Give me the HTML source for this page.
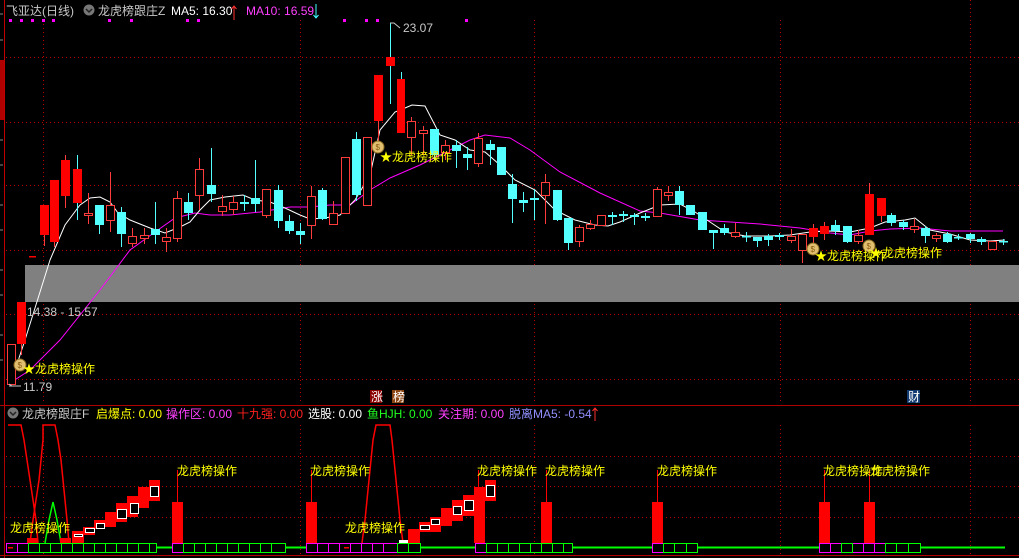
<!DOCTYPE html>
<html><head><meta charset="utf-8"><style>
body{margin:0;background:#000;width:1019px;height:558px;overflow:hidden;font-family:"Liberation Sans","Noto Sans CJK SC",sans-serif}
svg{position:absolute;left:0;top:0}
text{font-family:"Liberation Sans","Noto Sans CJK SC",sans-serif;font-size:12px}
</style></head><body>
<svg width="1019" height="558" viewBox="0 0 1019 558">
<!-- grid -->
<g stroke="#c00000" stroke-dasharray="1,3" stroke-width="1">
<line x1="6" y1="57.5" x2="1019" y2="57.5"/><line x1="6" y1="122.5" x2="1019" y2="122.5"/><line x1="6" y1="185.5" x2="1019" y2="185.5"/><line x1="6" y1="250.5" x2="1019" y2="250.5"/><line x1="6" y1="314.5" x2="1019" y2="314.5"/><line x1="6" y1="379.5" x2="1019" y2="379.5"/>
<line x1="43.5" y1="20" x2="43.5" y2="404"/><line x1="300.5" y1="20" x2="300.5" y2="404"/><line x1="534.5" y1="20" x2="534.5" y2="404"/><line x1="780.5" y1="20" x2="780.5" y2="404"/><line x1="970.5" y1="0" x2="970.5" y2="404"/>
<line x1="6" y1="456.5" x2="1019" y2="456.5"/><line x1="6" y1="486.5" x2="1019" y2="486.5"/><line x1="6" y1="517.5" x2="1019" y2="517.5"/>
<line x1="43.5" y1="425" x2="43.5" y2="555"/><line x1="300.5" y1="425" x2="300.5" y2="555"/><line x1="534.5" y1="425" x2="534.5" y2="555"/><line x1="780.5" y1="425" x2="780.5" y2="555"/><line x1="970.5" y1="425" x2="970.5" y2="555"/>
</g>
<!-- left axis -->
<line x1="4.5" y1="0" x2="4.5" y2="405" stroke="#c00000"/>
<rect x="0" y="60" width="4" height="60" fill="#b00000"/>
<g stroke="#888" stroke-width="1"><line x1="0" y1="14" x2="3" y2="14"/><line x1="0" y1="40" x2="3" y2="40"/><line x1="0" y1="140" x2="3" y2="140"/><line x1="0" y1="165" x2="3" y2="165"/><line x1="0" y1="205" x2="3" y2="205"/><line x1="0" y1="230" x2="3" y2="230"/><line x1="0" y1="270" x2="3" y2="270"/><line x1="0" y1="295" x2="3" y2="295"/><line x1="0" y1="335" x2="3" y2="335"/><line x1="0" y1="360" x2="3" y2="360"/></g>
<line x1="0" y1="405.5" x2="1019" y2="405.5" stroke="#b00000"/>
<line x1="0" y1="555.5" x2="1019" y2="555.5" stroke="#b00000"/>
<line x1="4.5" y1="405" x2="4.5" y2="558" stroke="#b00000"/>
<!-- grey band -->
<rect x="25" y="265" width="994" height="37" fill="#808080"/>
<!-- header -->
<text x="6" y="15" fill="#c8c8c8">飞亚达(日线)</text>
<circle cx="89" cy="10" r="5.5" fill="#777"/><path d="M86 9l3 3 3-3" stroke="#222" stroke-width="1.5" fill="none"/>
<text x="98" y="15" fill="#c8c8c8">龙虎榜跟庄Z</text>
<text x="171" y="15" fill="#fff">MA5: 16.30</text>
<path d="M234 20V6M231.5 9l2.5-3 2.5 3" stroke="#ff3030" fill="none"/>
<text x="246" y="15" fill="#ff40ff">MA10: 16.59</text>
<path d="M316 4v14M313.5 15l2.5 3 2.5-3" stroke="#40ffff" fill="none"/>
<g fill="#ff00ff"><rect x="9" y="19" width="3" height="3"/><rect x="20" y="19" width="3" height="3"/><rect x="31" y="19" width="3" height="3"/><rect x="42" y="19" width="3" height="3"/><rect x="52" y="19" width="3" height="3"/><rect x="108" y="19" width="3" height="3"/><rect x="130" y="19" width="3" height="3"/><rect x="186" y="19" width="3" height="3"/><rect x="197" y="19" width="3" height="3"/><rect x="343" y="19" width="3" height="3"/><rect x="365" y="19" width="3" height="3"/><rect x="376" y="19" width="3" height="3"/><rect x="465" y="19" width="3" height="3"/></g>
<!-- MA lines -->
<polyline fill="none" stroke="#ff00ff" stroke-width="1" points="10,383 30,370 60,340 100,290 130,250 155,232 175,218 195,213 210,215 230,215 260,212 290,207 310,207 330,205 350,205 370,190 390,178 420,165 450,150 470,140 485,135 510,138 530,150 560,172 600,193 640,211 660,213 700,220 760,224 800,228 830,233 850,235 870,231 890,229 920,228 950,231 1003,231"/>
<polyline fill="none" stroke="#ffffff" stroke-width="1" points="10,385 25,340 50,260 65,225 80,205 90,198 100,197 110,202 118,213 130,220 150,228 165,233 180,227 190,222 200,210 210,200 225,197 243,195 255,200 270,202 285,208 300,215 310,219 325,218 340,215 355,200 370,175 380,130 395,112 405,108 412,105 425,106 440,135 455,140 470,150 485,152 500,165 515,180 535,190 555,210 575,220 595,225 608,226 620,222 640,213 660,205 680,204 695,212 710,222 725,232 745,236 770,236 790,235 810,232 830,231 850,232 870,228 885,222 905,220 915,218 930,230 950,234 970,240 990,241 1005,240"/>
<!-- wicks -->
<g stroke="#ff3c3c" stroke-width="1">
<line x1="11.5" y1="344" x2="11.5" y2="385"/><line x1="21.5" y1="302" x2="21.5" y2="355"/><line x1="44.5" y1="205" x2="44.5" y2="246"/><line x1="54.5" y1="180" x2="54.5" y2="247"/><line x1="65.5" y1="155" x2="65.5" y2="208"/><line x1="88.5" y1="193" x2="88.5" y2="224"/><line x1="110.5" y1="172" x2="110.5" y2="232"/><line x1="132.5" y1="228" x2="132.5" y2="247"/><line x1="144.5" y1="228" x2="144.5" y2="244"/><line x1="166.5" y1="228" x2="166.5" y2="252"/><line x1="177.5" y1="191" x2="177.5" y2="242"/><line x1="199.5" y1="158" x2="199.5" y2="210"/><line x1="222.5" y1="195" x2="222.5" y2="216"/><line x1="233.5" y1="196" x2="233.5" y2="215"/><line x1="266.5" y1="189" x2="266.5" y2="218"/><line x1="311.5" y1="186" x2="311.5" y2="239"/><line x1="333.5" y1="201" x2="333.5" y2="224"/><line x1="378.5" y1="75" x2="378.5" y2="150"/><line x1="411.5" y1="117" x2="411.5" y2="155"/><line x1="423.5" y1="126" x2="423.5" y2="155"/><line x1="445.5" y1="140" x2="445.5" y2="160"/><line x1="478.5" y1="133" x2="478.5" y2="167"/><line x1="545.5" y1="174" x2="545.5" y2="224"/><line x1="579.5" y1="225" x2="579.5" y2="247"/><line x1="590.5" y1="220" x2="590.5" y2="230"/><line x1="601.5" y1="215" x2="601.5" y2="225"/><line x1="657.5" y1="187" x2="657.5" y2="216"/><line x1="668.5" y1="186" x2="668.5" y2="201"/><line x1="735.5" y1="223" x2="735.5" y2="238"/><line x1="791.5" y1="229" x2="791.5" y2="243"/><line x1="802.5" y1="234" x2="802.5" y2="263"/><line x1="813.5" y1="224" x2="813.5" y2="245"/><line x1="824.5" y1="222" x2="824.5" y2="240"/><line x1="858.5" y1="230" x2="858.5" y2="244"/><line x1="869.5" y1="183" x2="869.5" y2="235"/><line x1="881.5" y1="198" x2="881.5" y2="222"/><line x1="914.5" y1="219" x2="914.5" y2="233"/><line x1="936.5" y1="233" x2="936.5" y2="242"/><line x1="992.5" y1="241" x2="992.5" y2="249"/>
</g>
<g stroke="#54ffff" stroke-width="1">
<line x1="77.5" y1="155" x2="77.5" y2="220"/><line x1="99.5" y1="205" x2="99.5" y2="234"/><line x1="121.5" y1="207" x2="121.5" y2="247"/><line x1="155.5" y1="202" x2="155.5" y2="244"/><line x1="188.5" y1="193" x2="188.5" y2="220"/><line x1="211.5" y1="148" x2="211.5" y2="202"/><line x1="244.5" y1="195" x2="244.5" y2="211"/><line x1="255.5" y1="160" x2="255.5" y2="212"/><line x1="278.5" y1="185" x2="278.5" y2="228"/><line x1="289.5" y1="215" x2="289.5" y2="234"/><line x1="300.5" y1="223" x2="300.5" y2="244"/><line x1="322.5" y1="188" x2="322.5" y2="220"/><line x1="356.5" y1="132" x2="356.5" y2="201"/><line x1="390.5" y1="23" x2="390.5" y2="104"/><line x1="401.5" y1="72" x2="401.5" y2="133"/><line x1="434.5" y1="129" x2="434.5" y2="160"/><line x1="456.5" y1="140" x2="456.5" y2="168"/><line x1="467.5" y1="147" x2="467.5" y2="170"/><line x1="490.5" y1="140" x2="490.5" y2="165"/><line x1="512.5" y1="174" x2="512.5" y2="223"/><line x1="523.5" y1="192" x2="523.5" y2="212"/><line x1="534.5" y1="189" x2="534.5" y2="220"/><line x1="557.5" y1="190" x2="557.5" y2="221"/><line x1="568.5" y1="218" x2="568.5" y2="250"/><line x1="612.5" y1="212" x2="612.5" y2="225"/><line x1="623.5" y1="211" x2="623.5" y2="222"/><line x1="634.5" y1="213" x2="634.5" y2="225"/><line x1="645.5" y1="213" x2="645.5" y2="221"/><line x1="679.5" y1="186" x2="679.5" y2="215"/><line x1="713.5" y1="230" x2="713.5" y2="249"/><line x1="724.5" y1="224" x2="724.5" y2="235"/><line x1="746.5" y1="232" x2="746.5" y2="242"/><line x1="757.5" y1="237" x2="757.5" y2="247"/><line x1="768.5" y1="234" x2="768.5" y2="246"/><line x1="779.5" y1="233" x2="779.5" y2="240"/><line x1="835.5" y1="220" x2="835.5" y2="235"/><line x1="847.5" y1="226" x2="847.5" y2="243"/><line x1="891.5" y1="213" x2="891.5" y2="226"/><line x1="903.5" y1="220" x2="903.5" y2="230"/><line x1="925.5" y1="226" x2="925.5" y2="243"/><line x1="947.5" y1="232" x2="947.5" y2="243"/><line x1="958.5" y1="234" x2="958.5" y2="240"/><line x1="970.5" y1="233" x2="970.5" y2="243"/><line x1="981.5" y1="237" x2="981.5" y2="245"/><line x1="1003.5" y1="239" x2="1003.5" y2="245"/>
</g>
<!-- solid red bodies -->
<g fill="#ff0000">
<rect x="17" y="302" width="9" height="42"/><rect x="29" y="256" width="7" height="1.5"/><rect x="40" y="205" width="9" height="30"/><rect x="50" y="180" width="9" height="62"/><rect x="61" y="160" width="9" height="36"/><rect x="73" y="169" width="9" height="34"/><rect x="374" y="75" width="9" height="46"/><rect x="386" y="57" width="9" height="9"/><rect x="397" y="79" width="8" height="54"/><rect x="809" y="228" width="9" height="9"/><rect x="820" y="226" width="9" height="8"/><rect x="865" y="194" width="9" height="41"/><rect x="877" y="198" width="9" height="18"/>
</g>
<!-- hollow red bodies -->
<g fill="#000" stroke="#ff3c3c" stroke-width="1">
<rect x="7.5" y="344.5" width="8" height="40"/><rect x="84.5" y="213.5" width="8" height="2"/><rect x="106.5" y="205.5" width="8" height="15"/><rect x="128.5" y="236.5" width="8" height="7"/><rect x="140.5" y="235.5" width="8" height="3"/><rect x="162.5" y="237.5" width="8" height="4"/><rect x="173.5" y="198.5" width="8" height="40"/><rect x="195.5" y="169.5" width="8" height="26"/><rect x="218.5" y="206.5" width="8" height="5"/><rect x="229.5" y="202.5" width="8" height="7"/><rect x="262.5" y="189.5" width="8" height="26"/><rect x="307.5" y="196.5" width="8" height="29"/><rect x="329.5" y="213.5" width="8" height="11"/><rect x="341.5" y="157.5" width="8" height="56"/><rect x="363.5" y="137.5" width="8" height="68"/><rect x="407.5" y="121.5" width="8" height="16"/><rect x="419.5" y="130.5" width="8" height="3"/><rect x="441.5" y="145.5" width="8" height="7"/><rect x="474.5" y="138.5" width="8" height="25"/><rect x="541.5" y="182.5" width="8" height="13"/><rect x="575.5" y="227.5" width="8" height="14"/><rect x="586.5" y="224.5" width="8" height="4"/><rect x="597.5" y="215.5" width="8" height="10"/><rect x="653.5" y="189.5" width="8" height="27"/><rect x="664.5" y="192.5" width="8" height="3"/><rect x="731.5" y="232.5" width="8" height="4"/><rect x="787.5" y="236.5" width="8" height="4"/><rect x="798.5" y="234.5" width="8" height="16"/><rect x="854.5" y="235.5" width="8" height="6"/><rect x="910.5" y="226.5" width="8" height="3"/><rect x="932.5" y="235.5" width="8" height="3"/><rect x="988.5" y="241.5" width="8" height="8"/>
</g>
<!-- cyan bodies -->
<g fill="#54ffff">
<rect x="95" y="205" width="9" height="20"/><rect x="117" y="212" width="9" height="22"/><rect x="151" y="229" width="9" height="6"/><rect x="184" y="202" width="9" height="11"/><rect x="207" y="185" width="9" height="9"/><rect x="240" y="202" width="9" height="2"/><rect x="251" y="198" width="9" height="6"/><rect x="274" y="190" width="9" height="31"/><rect x="285" y="221" width="9" height="10"/><rect x="296" y="231" width="9" height="4"/><rect x="318" y="190" width="9" height="29"/><rect x="352" y="139" width="9" height="56"/><rect x="430" y="129" width="9" height="26"/><rect x="452" y="145" width="9" height="6"/><rect x="463" y="154" width="9" height="4"/><rect x="486" y="144" width="9" height="6"/><rect x="497" y="147" width="9" height="28"/><rect x="508" y="184" width="9" height="15"/><rect x="519" y="200" width="9" height="3"/><rect x="530" y="198" width="9" height="2"/><rect x="553" y="190" width="9" height="30"/><rect x="564" y="218" width="9" height="25"/><rect x="608" y="215" width="9" height="2"/><rect x="619" y="214" width="9" height="2"/><rect x="630" y="215" width="9" height="2"/><rect x="641" y="216" width="9" height="2"/><rect x="675" y="191" width="9" height="14"/><rect x="686" y="205" width="9" height="10"/><rect x="698" y="212" width="9" height="18"/><rect x="709" y="230" width="9" height="3"/><rect x="720" y="228" width="9" height="5"/><rect x="742" y="236" width="9" height="1.5"/><rect x="753" y="237" width="9" height="4"/><rect x="764" y="236" width="9" height="4"/><rect x="775" y="235" width="9" height="2"/><rect x="831" y="225" width="9" height="6"/><rect x="843" y="226" width="9" height="16"/><rect x="887" y="215" width="9" height="8"/><rect x="899" y="222" width="9" height="5"/><rect x="921" y="228" width="9" height="8"/><rect x="943" y="234" width="9" height="8"/><rect x="954" y="237" width="9" height="1.5"/><rect x="966" y="234" width="9" height="5"/><rect x="977" y="239" width="9" height="3"/><rect x="999" y="241" width="9" height="1.5"/>
</g>
<!-- annotations -->
<path d="M390 23h4l6 5" stroke="#c8c8c8" fill="none"/>
<text x="403" y="32" fill="#c8c8c8">23.07</text>
<path d="M12 386l-3 -2M9 386h12" stroke="#c8c8c8" fill="none"/>
<text x="23" y="391" fill="#c8c8c8">11.79</text>
<text x="27" y="316" fill="#c8c8c8">14.38 - 15.57</text>
<g fill="#e0c070" stroke="#8a6a20" stroke-width="1">
<ellipse cx="20" cy="365" rx="6" ry="6"/><ellipse cx="378" cy="147" rx="6" ry="6"/><ellipse cx="813" cy="249" rx="6" ry="6"/><ellipse cx="869" cy="246" rx="6" ry="6"/>
</g>
<g fill="#8a5a10" font-size="8"><text x="17.5" y="368" style="font-size:8px">$</text><text x="375.5" y="150" style="font-size:8px">$</text><text x="810.5" y="252" style="font-size:8px">$</text><text x="866.5" y="249" style="font-size:8px">$</text></g>
<g fill="#ffff00">
<text x="23" y="373">★龙虎榜操作</text><text x="380" y="161">★龙虎榜操作</text><text x="815" y="260">★龙虎榜操作</text><text x="870" y="257">★龙虎榜操作</text>
</g>
<rect x="370" y="390" width="12" height="13" fill="#8b0000"/><text x="371" y="401" fill="#fff">涨</text>
<rect x="392" y="390" width="12" height="13" fill="#8b4513"/><text x="393" y="401" fill="#fff">榜</text>
<rect x="907" y="390" width="13" height="13" fill="#103a70"/><text x="908" y="401" fill="#fff">财</text>
<!-- lower header -->
<circle cx="13" cy="413" r="5.5" fill="#777"/><path d="M10 412l3 3 3-3" stroke="#222" stroke-width="1.5" fill="none"/>
<text x="22" y="418" fill="#c8c8c8">龙虎榜跟庄F</text>
<text x="96" y="418" fill="#ffff00">启爆点: 0.00</text>
<text x="166" y="418" fill="#ff40ff">操作区: 0.00</text>
<text x="237" y="418" fill="#ff2020">十九强: 0.00</text>
<text x="308" y="418" fill="#fff">选股: 0.00</text>
<text x="367" y="418" fill="#20ff20">鱼HJH: 0.00</text>
<text x="438" y="418" fill="#ff40ff">关注期: 0.00</text>
<text x="509" y="418" fill="#9090ff">脱离MA5: -0.54</text>
<path d="M595 421V408M592.5 411l2.5-3 2.5 3" stroke="#ff3030" fill="none"/>
<!-- lower panel: triangle lines -->
<polyline fill="none" stroke="#ff0000" stroke-width="1.5" points="8,425 21,425 24,440 27,460 30,480 33,500 36,520 38,543"/>
<polyline fill="none" stroke="#ff0000" stroke-width="1.5" points="30,543 33,520 36,500 39,480 41,460 43,440 43,425 55,425 58,440 61,460 63,480 65,500 67,520 69,543"/>
<polyline fill="none" stroke="#00ff00" stroke-width="1.5" points="45,543 49,520 53,502 57,520 61,543"/>
<polyline fill="none" stroke="#ff0000" stroke-width="1.5" points="362,543 365,520 367,500 369,480 371,460 373,440 376,425 390,425 392,440 394,460 396,480 398,500 400,520 403,543"/>
<!-- stairs left -->
<g fill="#ff0000">
<rect x="27" y="538" width="11" height="5"/><rect x="60" y="538" width="11" height="5"/>
<rect x="72" y="531" width="12" height="12"/><rect x="83" y="527" width="12" height="8"/><rect x="94" y="520" width="11" height="9"/><rect x="105" y="512" width="11" height="15"/><rect x="116" y="503" width="11" height="19"/><rect x="127" y="496" width="11" height="21"/><rect x="138" y="487" width="11" height="21"/><rect x="149" y="480" width="11" height="21"/>
<rect x="408" y="529" width="12" height="14"/><rect x="419" y="522" width="12" height="10"/><rect x="430" y="517" width="11" height="15"/><rect x="441" y="508" width="11" height="18"/><rect x="452" y="500" width="11" height="21"/><rect x="463" y="495" width="11" height="21"/><rect x="474" y="487" width="11" height="56"/><rect x="485" y="480" width="11" height="21"/>
<rect x="172" y="502" width="11" height="41"/><rect x="306" y="502" width="11" height="41"/><rect x="541" y="502" width="11" height="41"/><rect x="652" y="502" width="11" height="41"/><rect x="819" y="502" width="11" height="41"/><rect x="864" y="502" width="11" height="41"/>
</g>
<g fill="#000" stroke="#fff" stroke-width="1">
<rect x="74.5" y="534.5" width="8" height="2"/><rect x="85.5" y="528.5" width="9" height="4"/><rect x="96.5" y="523.5" width="8" height="5"/><rect x="117.5" y="509.5" width="9" height="9"/><rect x="130.5" y="503.5" width="8" height="10"/><rect x="150.5" y="486.5" width="8" height="10"/>
<rect x="420.5" y="525.5" width="9" height="4"/><rect x="431.5" y="519.5" width="8" height="5"/><rect x="453.5" y="506.5" width="8" height="8"/><rect x="464.5" y="500.5" width="9" height="10"/><rect x="486.5" y="485.5" width="8" height="11"/>
</g>
<rect x="399" y="540" width="9" height="3" fill="#fff"/>
<g stroke="#ff0000" stroke-width="1"><line x1="177.5" y1="470" x2="177.5" y2="502"/><line x1="311.5" y1="470" x2="311.5" y2="502"/><line x1="478.5" y1="470" x2="478.5" y2="487"/><line x1="546.5" y1="470" x2="546.5" y2="502"/><line x1="657.5" y1="470" x2="657.5" y2="502"/><line x1="824.5" y1="470" x2="824.5" y2="502"/><line x1="869.5" y1="470" x2="869.5" y2="502"/></g>
<g fill="#ffff00">
<text x="177" y="475">龙虎榜操作</text><text x="310" y="475">龙虎榜操作</text><text x="477" y="475">龙虎榜操作</text><text x="545" y="475">龙虎榜操作</text><text x="657" y="475">龙虎榜操作</text><text x="823" y="475">龙虎榜操作</text><text x="870" y="475">龙虎榜操作</text><text x="10" y="532">龙虎榜操作</text><text x="345" y="532">龙虎榜操作</text>
</g>
<!-- baseline + boxes -->
<line x1="6" y1="547.5" x2="1005" y2="547.5" stroke="#00ff00" stroke-width="2"/>
<g fill="#000" stroke-width="1">
<g stroke="#ff00ff"><rect x="6.5" y="543.5" width="150" height="9"/><rect x="172.5" y="543.5" width="113" height="9"/><rect x="306.5" y="543.5" width="114" height="9"/><rect x="475.5" y="543.5" width="97" height="9"/><rect x="652.5" y="543.5" width="45" height="9"/><rect x="819.5" y="543.5" width="101" height="9"/></g>
<g stroke="#00ff00" fill="none"><rect x="28.5" y="543.5" width="44" height="9"/><rect x="72.5" y="543.5" width="84" height="9"/><rect x="183.5" y="543.5" width="102" height="9"/><rect x="397.5" y="543.5" width="23" height="9"/><rect x="486.5" y="543.5" width="86" height="9"/><rect x="663.5" y="543.5" width="34" height="9"/><rect x="841.5" y="543.5" width="11" height="9"/><rect x="885.5" y="543.5" width="35" height="9"/></g>
<g stroke="#00ff00"><line x1="39.5" y1="543" x2="39.5" y2="553"/><line x1="50.5" y1="543" x2="50.5" y2="553"/><line x1="61.5" y1="543" x2="61.5" y2="553"/><line x1="83.5" y1="543" x2="83.5" y2="553"/><line x1="94.5" y1="543" x2="94.5" y2="553"/><line x1="105.5" y1="543" x2="105.5" y2="553"/><line x1="116.5" y1="543" x2="116.5" y2="553"/><line x1="127.5" y1="543" x2="127.5" y2="553"/><line x1="138.5" y1="543" x2="138.5" y2="553"/><line x1="149.5" y1="543" x2="149.5" y2="553"/><line x1="194.5" y1="543" x2="194.5" y2="553"/><line x1="205.5" y1="543" x2="205.5" y2="553"/><line x1="216.5" y1="543" x2="216.5" y2="553"/><line x1="227.5" y1="543" x2="227.5" y2="553"/><line x1="238.5" y1="543" x2="238.5" y2="553"/><line x1="249.5" y1="543" x2="249.5" y2="553"/><line x1="260.5" y1="543" x2="260.5" y2="553"/><line x1="271.5" y1="543" x2="271.5" y2="553"/><line x1="408.5" y1="543" x2="408.5" y2="553"/><line x1="497.5" y1="543" x2="497.5" y2="553"/><line x1="508.5" y1="543" x2="508.5" y2="553"/><line x1="519.5" y1="543" x2="519.5" y2="553"/><line x1="530.5" y1="543" x2="530.5" y2="553"/><line x1="541.5" y1="543" x2="541.5" y2="553"/><line x1="552.5" y1="543" x2="552.5" y2="553"/><line x1="563.5" y1="543" x2="563.5" y2="553"/><line x1="674.5" y1="543" x2="674.5" y2="553"/><line x1="686.5" y1="543" x2="686.5" y2="553"/><line x1="896.5" y1="543" x2="896.5" y2="553"/><line x1="908.5" y1="543" x2="908.5" y2="553"/></g>
<g stroke="#ff00ff"><line x1="17.5" y1="543" x2="17.5" y2="553"/><line x1="317.5" y1="543" x2="317.5" y2="553"/><line x1="328.5" y1="543" x2="328.5" y2="553"/><line x1="339.5" y1="543" x2="339.5" y2="553"/><line x1="350.5" y1="543" x2="350.5" y2="553"/><line x1="361.5" y1="543" x2="361.5" y2="553"/><line x1="372.5" y1="543" x2="372.5" y2="553"/><line x1="383.5" y1="543" x2="383.5" y2="553"/><line x1="830.5" y1="543" x2="830.5" y2="553"/><line x1="863.5" y1="543" x2="863.5" y2="553"/><line x1="874.5" y1="543" x2="874.5" y2="553"/></g>
</g>
<rect x="8" y="547" width="5" height="1.5" fill="#ff0000"/>
<rect x="344" y="547" width="5" height="1.5" fill="#ff0000"/>
</svg>
</body></html>
